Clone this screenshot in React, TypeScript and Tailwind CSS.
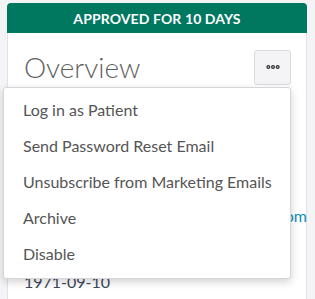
import { MoreHorizontal } from 'lucide-react';

const menuItems = [
    'Log in as Patient',
    'Send Password Reset Email',
    'Unsubscribe from Marketing Emails',
    'Archive',
    'Disable',
];

const App = () => {
    return (
        <div
            className="relative w-[315px] h-[299px] overflow-hidden bg-[#f4f4f6] pt-[3px] pl-[7px] pr-[8px]"
            style={{ fontFamily: 'Lato, "Open Sans", sans-serif' }}
        >
            {/* Patient card */}
            <div className="h-[320px] bg-white border border-[#e2e2e4] rounded-t-[4px]">
                <div className="h-[30px] -mx-px -mt-px bg-[#00775f] rounded-t-[4px] flex items-center justify-center text-white text-[14px] font-bold tracking-[0.1px]">
                    APPROVED FOR 10 DAYS
                </div>
                <div className="pl-[16px] pr-[15px]">
                    <div className="flex items-center justify-between pt-[16px]">
                        <h1
                            className="text-[28px] font-light text-[#5f5f5f] leading-[36px]"
                            style={{ fontFamily: '"Lato Light", Lato, sans-serif' }}
                        >
                            Overview
                        </h1>
                        <button className="w-[37px] h-[35px] flex items-center justify-center bg-[#f4f4f6] border border-[#dcdcde] rounded-[3px] text-[#333]">
                            <MoreHorizontal size={16} strokeWidth={4} />
                        </button>
                    </div>
                    <div className="mt-[47px] text-[16px] leading-[24px]">
                        <div className="h-[36px] text-[#555]">Jane Doe</div>
                        <div className="h-[36px] text-[#555]">Female</div>
                        <div className="h-[36px] flex justify-end -mr-[16px] whitespace-nowrap text-[#0e8fb0]">jane.doe@example.com</div>
                        <div className="h-[30px] text-[#555]">(555) 555-0123</div>
                        <div className="h-[36px] text-[#3b475a]">1971-09-10</div>
                    </div>
                </div>
            </div>

            {/* Actions dropdown */}
            <div className="absolute left-[3px] top-[87px] w-[288px] pt-[4px] pb-[6px] bg-white border border-[#d6d6d8] rounded-[3px] shadow-[0_3px_8px_rgba(0,0,0,0.18)]">
                {menuItems.map(item => (
                    <div key={item} className="h-[36px] flex items-center pl-[19px] text-[16px] text-[#555] whitespace-nowrap">
                        {item}
                    </div>
                ))}
            </div>
        </div>
    );
};

export default App;
